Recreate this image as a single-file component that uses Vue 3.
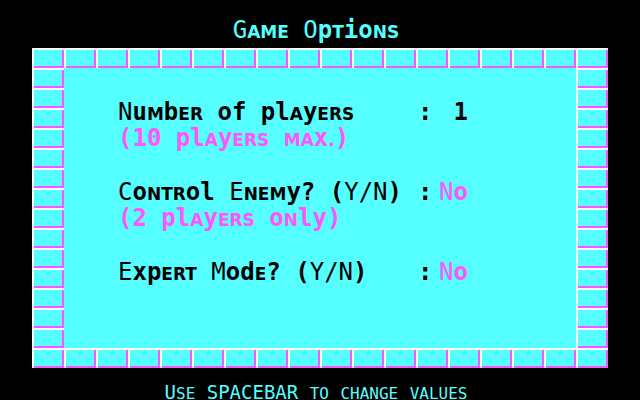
<script setup>
import { ref, computed } from 'vue'

const players = ref(1)
const enemy = ref(false)
const expert = ref(false)

const options = computed(() => [
  {
    id: 'players',
    label: 'Number of players',
    hint: '(10 players max.)',
    value: String(players.value),
    plain: true,
    change: () => { players.value = (players.value % 10) + 1 }
  },
  {
    id: 'enemy',
    label: 'Control Enemy? (Y/N)',
    hint: '(2 players only)',
    value: enemy.value ? 'Yes' : 'No',
    change: () => { enemy.value = !enemy.value }
  },
  {
    id: 'expert',
    label: 'Expert Mode? (Y/N)',
    hint: '',
    value: expert.value ? 'Yes' : 'No',
    change: () => { expert.value = !expert.value }
  }
])

// The display face mixes thin capitals, heavy lowercase and small capitals.
function runs(text) {
  return (text.match(/[aemnrst.]+|[bcdfghijklopquvwxyz0-9:?()]+|[^a-z0-9:.?()]+/g) || []).map(part => ({
    part,
    kind: /^[aemnrst.]/.test(part) ? 'small' : /^[a-z0-9:?()]/.test(part) ? 'heavy' : 'thin'
  }))
}

function footerRuns(text) {
  return text.match(/[a-z]+|[^a-z]+/g).map(part => ({
    part,
    kind: /^[a-z]/.test(part) ? 'small' : 'thin'
  }))
}
</script>

<template>
  <main class="screen">
    <h1 class="title display"><span v-for="(r, i) in runs('Game Options')" :key="i" :class="r.kind">{{ r.part }}</span></h1>
    <div class="wall">
      <section class="panel display">
        <div v-for="o in options" :key="o.id" class="option">
          <label class="name" :for="o.id"><span v-for="(r, i) in runs(o.label)" :key="i" :class="r.kind">{{ r.part }}</span></label>
          <span class="colon heavy">:</span>
          <button :id="o.id" type="button" class="value" :class="{ plain: o.plain }" @click="o.change"><span v-for="(r, i) in runs(o.value)" :key="i" :class="r.kind">{{ r.part }}</span></button>
          <p v-if="o.hint" class="hint"><span v-for="(r, i) in runs(o.hint)" :key="i" :class="r.kind">{{ r.part }}</span></p>
        </div>
      </section>
    </div>
    <p class="footer"><span v-for="(r, i) in footerRuns('Use SPACEBAR to change values')" :key="i" :class="r.kind">{{ r.part }}</span></p>
  </main>
</template>

<style>
body {
  margin: 0;
  background: #000;
}
</style>

<style scoped>
.screen {
  box-sizing: border-box;
  min-height: 100vh;
  padding: 17px 32px 0;
  overflow: hidden;
  background: #000;
  color: #55ffff;
  font-family: "DejaVu Sans Mono", monospace;
}

.display {
  font-size: 24px;
  line-height: 26px;
}

.display .heavy {
  font-weight: 700;
}

.display .small {
  font-family: "DejaVu Sans", sans-serif;
  font-size: 17px;
  font-weight: 700;
  line-height: 1;
  text-transform: uppercase;
}

.title {
  margin: 0 0 5px;
  padding-right: 8px;
  font-weight: 400;
  text-align: center;
  white-space: pre;
}

.wall {
  padding: 20px 32px;
  background-color: #55ffff;
  background-image:
    linear-gradient(90deg, #fff 2px, transparent 2px),
    linear-gradient(#fff 2px, transparent 2px),
    linear-gradient(270deg, #ff55ff 2px, transparent 2px),
    linear-gradient(0deg, #ff55ff 2px, transparent 2px);
  background-size: 32px 20px;
}

.panel {
  display: flex;
  flex-direction: column;
  gap: 28px;
  box-sizing: border-box;
  min-height: 280px;
  padding: 31px 54px 28px;
  background: #55ffff;
  color: #000;
}

.option {
  display: grid;
  grid-template-columns: 300px 20px 30px;
  white-space: pre;
}

.value {
  justify-self: end;
  padding: 0;
  border: 0;
  background: none;
  color: #ff55ff;
  font: inherit;
  cursor: pointer;
}

.value.plain {
  color: #000;
}

.hint {
  grid-column: 1 / -1;
  margin: 0;
  color: #ff55ff;
}

.footer {
  margin: 0;
  padding: 16px 8px 0 0;
  font-size: 19px;
  line-height: 16px;
  text-align: center;
  white-space: pre;
}

.footer .small {
  font-size: 16px;
  line-height: 1;
  text-transform: uppercase;
}
</style>
